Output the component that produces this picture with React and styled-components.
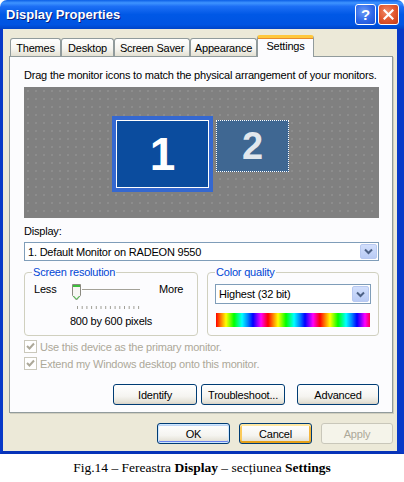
import React from 'react';
import styled, { createGlobalStyle, css } from 'styled-components';

const GlobalStyle = createGlobalStyle`
  body {
    margin: 0;
    background: #fff;
    font-family: "Liberation Sans", Arial, sans-serif;
    font-size: 11px;
    letter-spacing: -0.2px;
    color: #000;
  }
`;

const Page = styled.div`
  width: 404px;
  height: 482px;
  display: flex;
  flex-direction: column;
`;

const Window = styled.div`
  width: 404px;
  height: 454px;
  display: flex;
  flex-direction: column;
  flex: none;
`;

const TitleBar = styled.div`
  height: 29px;
  flex: none;
  display: flex;
  align-items: center;
  gap: 2px;
  padding: 0 5px 0 6px;
  border-radius: 7px 7px 0 0;
  background: linear-gradient(180deg, #0b5ee6 0%, #3f94ff 10%, #1d6ff5 22%, #0058e6 50%, #0054e2 85%, #0044c8 100%);
`;

const Title = styled.div`
  flex: 1;
  color: #fff;
  font-weight: bold;
  font-size: 13px;
  letter-spacing: 0;
  text-shadow: 1px 1px 0 #0a1d7a;
`;

const CaptionButton = styled.div`
  width: 21px;
  height: 21px;
  box-sizing: border-box;
  border: 1px solid #fff;
  border-radius: 3px;
  display: flex;
  align-items: center;
  justify-content: center;
  color: #fff;
  font-weight: bold;
  font-size: 15px;
  ${p => p.$close
    ? css`background: radial-gradient(circle at 40% 35%, #f08a68 0%, #e2582f 50%, #c33a17 100%);`
    : css`background: radial-gradient(circle at 40% 35%, #6d9cf7 0%, #2e67e8 55%, #1c4fd0 100%);`}
`;

const Body = styled.div`
  flex: 1;
  display: flex;
  flex-direction: column;
  background: #ece9d8;
  border-left: 3px solid #0839c8;
  border-right: 7px solid #0839c8;
  border-bottom: 3px solid #0733b8;
  padding: 6px 4px 7px 6px;
`;

const TabRow = styled.div`
  display: flex;
  align-items: flex-end;
  padding-left: 1px;
  height: 21px;
  position: relative;
  z-index: 1;
`;

const Tab = styled.div`
  width: ${p => p.$w}px;
  box-sizing: border-box;
  display: flex;
  align-items: center;
  justify-content: center;
  border: 1px solid #919b9c;
  border-bottom: none;
  border-radius: 3px 3px 0 0;
  ${p => p.$active
    ? css`
        height: 22px;
        margin-bottom: -1px;
        border-top: 3px solid #ffc83c;
        box-shadow: inset 0 1px 0 #e68b2c;
        background: #fcfcfe;
        padding-bottom: 3px;
      `
    : css`
        height: 18px;
        background: linear-gradient(180deg, #ffffff 0%, #f5f4ef 60%, #e3e0d2 100%);
      `}
`;

const Panel = styled.div`
  height: 357px;
  box-sizing: border-box;
  border: 1px solid #919b9c;
  background: #fcfcfe;
  box-shadow: 1px 1px 0 #d0cebf;
  padding: 12px 13px 7px 14px;
  display: flex;
  flex-direction: column;
`;

const Line = styled.div`
  line-height: 13px;
  height: 13px;
  white-space: nowrap;
  margin-top: ${p => p.$mt || 0}px;
  color: ${p => (p.$disabled ? '#aca899' : '#000')};
`;

const Canvas = styled.div`
  position: relative;
  margin-top: 5px;
  height: 131px;
  background-color: #808080;
  background-image: radial-gradient(#9a9a9a 0.6px, transparent 0.8px);
  background-size: 8px 8px;
`;

const Monitor = styled.div`
  position: absolute;
  box-sizing: border-box;
  display: flex;
  align-items: center;
  justify-content: center;
  color: #fff;
  font-weight: bold;
  letter-spacing: 0;
  ${p => p.$primary
    ? css`
        left: 88px;
        top: 29px;
        width: 101px;
        height: 76px;
        border: 4px solid #3568d0;
        box-shadow: inset 0 0 0 1px #fff;
        background: #0b4c9e;
        font-size: 46px;
      `
    : css`
        left: 192px;
        top: 33px;
        width: 73px;
        height: 52px;
        border: 1px dotted #fff;
        background: #3f6792;
        font-size: 38px;
        color: rgba(255, 255, 255, 0.85);
      `}
`;

const Select = styled.div`
  height: ${p => p.$h || 19}px;
  margin-top: ${p => p.$mt || 0}px;
  box-sizing: border-box;
  border: 1px solid #7f9db9;
  background: #fff;
  display: flex;
  align-items: center;
  padding: 1px 1px 1px 3px;
`;

const SelectText = styled.div`
  flex: 1;
  white-space: nowrap;
`;

const SelectArrow = styled.div`
  width: 17px;
  align-self: stretch;
  border-radius: 2px;
  background: linear-gradient(180deg, #d2dffc 0%, #b9cbf5 100%);
  border: 1px solid #b8c9f1;
  box-sizing: border-box;
  display: flex;
  align-items: center;
  justify-content: center;
`;

const GroupRow = styled.div`
  display: grid;
  grid-template-columns: 174px 1fr;
  gap: 9px;
  margin-top: 5px;
  height: 70px;
`;

const Group = styled.fieldset`
  margin: 0;
  min-width: 0;
  box-sizing: border-box;
  height: 70px;
  border: 1px solid #d0d0bf;
  border-radius: 4px;
  padding: 0 ${p => p.$pad}px 0 ${p => p.$pad}px;
`;

const Legend = styled.legend`
  color: #0046d5;
  line-height: 13px;
  padding: 0 1px;
  margin-left: ${p => p.$ml}px;
`;

const SliderRow = styled.div`
  display: grid;
  grid-template-columns: 30px 95px auto;
  align-items: start;
  margin-top: 2px;
  height: 32px;
`;

const SliderLabel = styled.span`
  margin-top: 2px;
  line-height: 13px;
`;

const PixelText = styled.div`
  text-align: center;
  line-height: 13px;
  margin-top: 2px;
`;

const ColorBar = styled.div`
  height: 14px;
  margin: 9px 1px 0;
  background: repeating-linear-gradient(90deg,
    #ff0000 0px, #ff8000 5px, #ffff00 10px, #00ff00 18px, #00ffff 26px,
    #0080ff 32px, #0000ff 37px, #ff00ff 45px, #ff0000 52px);
`;

const CheckRow = styled.div`
  display: flex;
  align-items: center;
  gap: 3px;
  height: 13px;
  margin-top: 4px;
  color: #aca899;
`;

const CheckBox = styled.div`
  width: 13px;
  height: 13px;
  box-sizing: border-box;
  border: 1px solid #cac8bb;
  background: #fff;
  display: flex;
  align-items: center;
  justify-content: center;
`;

const ButtonRow = styled.div`
  display: flex;
  justify-content: flex-end;
  gap: ${p => p.$gap}px;
  margin-top: ${p => p.$mt || 0}px;
`;

const Button = styled.div`
  width: ${p => p.$w}px;
  height: 21px;
  box-sizing: border-box;
  border: 1px solid #003c74;
  border-radius: 3px;
  display: flex;
  align-items: center;
  justify-content: center;
  margin-left: ${p => p.$ml || 0}px;
  background: linear-gradient(180deg, #ffffff 0%, #f5f4f0 60%, #e4e1d6 90%, #d6d0c5 100%);
  ${p => p.$variant === 'default' && css`
    box-shadow: inset 0 0 0 1px #cee7ff, inset 0 -1px 0 1px #6982ee, inset 0 1px 0 1px #bcd4f6;
  `}
  ${p => p.$variant === 'hover' && css`
    box-shadow: inset 0 2px 0 #ffe7a2, inset 0 -2px 0 #e5a01a, inset 2px 0 0 #fbca5a, inset -2px 0 0 #f4b53b;
  `}
  ${p => p.$variant === 'disabled' && css`
    border-color: #c9c7ba;
    background: #f5f4ea;
    color: #aca899;
  `}
`;

const Caption = styled.div`
  flex: 1;
  display: flex;
  align-items: center;
  justify-content: center;
  font-family: "Liberation Serif", "Times New Roman", serif;
  font-size: 13.5px;
  letter-spacing: 0;
`;

const Chevron = () => (
  <svg width="9" height="7" viewBox="0 0 9 7">
    <path d="M1 1.5 L4.5 5 L8 1.5" fill="none" stroke="#4d6185" strokeWidth="2" />
  </svg>
);

const Check = () => (
  <svg width="9" height="9" viewBox="0 0 9 9">
    <path d="M1 4 L3.5 6.5 L8 1.5" fill="none" stroke="#aca899" strokeWidth="2" />
  </svg>
);

const CloseGlyph = () => (
  <svg width="11" height="11" viewBox="0 0 11 11">
    <path d="M1.5 1.5 L9.5 9.5 M9.5 1.5 L1.5 9.5" stroke="#fff" strokeWidth="2.2" strokeLinecap="square" />
  </svg>
);

const Slider = () => {
  const ticks = [];
  for (let i = 0; i < 14; i++) {
    const x = 13.5 + i * 4.7;
    ticks.push(<line key={i} x1={x} y1="25" x2={x} y2="28" stroke="#a09f96" strokeWidth="1" />);
  }
  return (
    <svg width="95" height="32" viewBox="0 0 95 32">
      <line x1="18" y1="8.5" x2="76" y2="8.5" stroke="#a3a197" />
      <line x1="18" y1="9.5" x2="76" y2="9.5" stroke="#fff" />
      {ticks}
      <path d="M8.5 3.5 H16.5 V14.5 L12.5 19 L8.5 14.5 Z" fill="#f7f7f4" stroke="#8b8a80" />
      <rect x="9" y="4" width="7" height="2" fill="#3cbe3c" />
      <path d="M9.5 15 L12.5 18.2 L15.5 15" fill="none" stroke="#3cbe3c" />
    </svg>
  );
};

const tabs = [
  { label: 'Themes', w: 51 },
  { label: 'Desktop', w: 53 },
  { label: 'Screen Saver', w: 76 },
  { label: 'Appearance', w: 67 },
  { label: 'Settings', w: 57, active: true },
];

export default function App() {
  return (
    <Page>
      <GlobalStyle />
      <Window>
        <TitleBar>
          <Title>Display Properties</Title>
          <CaptionButton>?</CaptionButton>
          <CaptionButton $close><CloseGlyph /></CaptionButton>
        </TitleBar>
        <Body>
          <TabRow>
            {tabs.map(t => (
              <Tab key={t.label} $w={t.w} $active={t.active}>{t.label}</Tab>
            ))}
          </TabRow>
          <Panel>
            <Line>Drag the monitor icons to match the physical arrangement of your monitors.</Line>
            <Canvas>
              <Monitor $primary>1</Monitor>
              <Monitor>2</Monitor>
            </Canvas>
            <Line $mt={7}>Display:</Line>
            <Select $mt={4}>
              <SelectText>1. Default Monitor on RADEON 9550</SelectText>
              <SelectArrow><Chevron /></SelectArrow>
            </Select>
            <GroupRow>
              <Group $pad={9}>
                <Legend $ml={-2}>Screen resolution</Legend>
                <SliderRow>
                  <SliderLabel>Less</SliderLabel>
                  <Slider />
                  <SliderLabel>More</SliderLabel>
                </SliderRow>
                <PixelText>800 by 600 pixels</PixelText>
              </Group>
              <Group $pad={7}>
                <Legend $ml={0}>Color quality</Legend>
                <Select $mt={5} $h={20}>
                  <SelectText>Highest (32 bit)</SelectText>
                  <SelectArrow><Chevron /></SelectArrow>
                </Select>
                <ColorBar />
              </Group>
            </GroupRow>
            <CheckRow>
              <CheckBox><Check /></CheckBox>
              Use this device as the primary monitor.
            </CheckRow>
            <CheckRow>
              <CheckBox><Check /></CheckBox>
              Extend my Windows desktop onto this monitor.
            </CheckRow>
            <ButtonRow $gap={4} $mt={14}>
              <Button $w={84}>Identify</Button>
              <Button $w={84}>Troubleshoot...</Button>
              <Button $w={82} $ml={8}>Advanced</Button>
            </ButtonRow>
          </Panel>
          <ButtonRow $gap={9} $mt={10}>
            <Button $w={73} $variant="default">OK</Button>
            <Button $w={73} $variant="hover">Cancel</Button>
            <Button $w={72} $variant="disabled">Apply</Button>
          </ButtonRow>
        </Body>
      </Window>
      <Caption>
        <span>Fig.14 – Fereastra <b>Display</b> – secțiunea <b>Settings</b></span>
      </Caption>
    </Page>
  );
}
